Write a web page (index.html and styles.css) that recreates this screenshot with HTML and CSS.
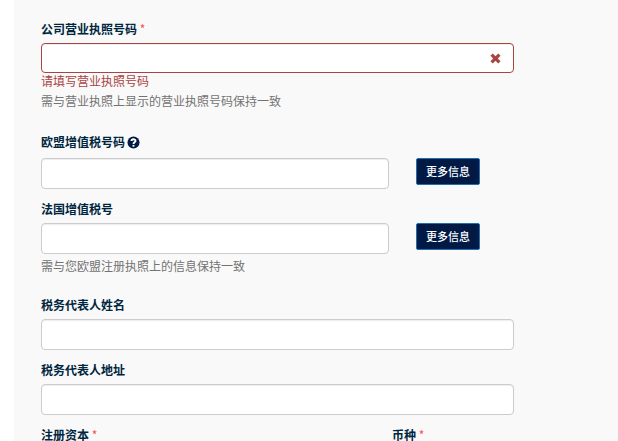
FILE: index.html
```html
<!DOCTYPE html>
<html lang="zh-CN">
<head>
    <meta charset="UTF-8" />
    <meta name="viewport" content="width=device-width, initial-scale=1.0" />
    <title>公司营业执照号码</title>
    <link rel="stylesheet" href="styles.css">
</head>

<body>
    <form class="panel">
        <div class="form-group has-error">
            <label for="license">公司营业执照号码 <span class="required">*</span></label>
            <div class="input-wrap">
                <input type="text" id="license" class="form-control" />
                <svg class="feedback" viewBox="0 0 12 12" aria-hidden="true">
                    <path d="M3 0.5 L6 3.5 L9 0.5 L11.5 3 L8.5 6 L11.5 9 L9 11.5 L6 8.5 L3 11.5 L0.5 9 L3.5 6 L0.5 3 Z" />
                </svg>
            </div>
            <p class="error-text">请填写营业执照号码</p>
            <p class="help-text">需与营业执照上显示的营业执照号码保持一致</p>
        </div>

        <div class="form-group">
            <label for="euVat" class="with-icon">欧盟增值税号码
                <svg class="help-icon" viewBox="0 0 14 14" aria-hidden="true">
                    <circle cx="7" cy="7" r="6.5" />
                    <path d="M4.8 5.4 C4.8 2.9 9.2 2.9 9.2 5.3 C9.2 6.8 7 6.8 7 8.5" />
                    <rect x="6" y="9.6" width="2" height="1.9" />
                </svg>
            </label>
            <div class="input-row">
                <input type="text" id="euVat" class="form-control" />
                <button type="button" class="btn">更多信息</button>
            </div>
        </div>

        <div class="form-group">
            <label for="frVat">法国增值税号</label>
            <div class="input-row">
                <input type="text" id="frVat" class="form-control" />
                <button type="button" class="btn">更多信息</button>
            </div>
            <p class="help-text">需与您欧盟注册执照上的信息保持一致</p>
        </div>

        <div class="form-group">
            <label for="repName">税务代表人姓名</label>
            <input type="text" id="repName" class="form-control" />
        </div>

        <div class="form-group">
            <label for="repAddress">税务代表人地址</label>
            <input type="text" id="repAddress" class="form-control" />
        </div>

        <div class="split">
            <div class="form-group">
                <label for="capital">注册资本 <span class="required">*</span></label>
                <input type="text" id="capital" class="form-control" />
            </div>
            <div class="form-group">
                <label for="currency">币种 <span class="required">*</span></label>
                <input type="text" id="currency" class="form-control" />
            </div>
        </div>
    </form>
</body>
</html>
```

FILE: styles.css
```css
* {
    box-sizing: border-box;
}

body {
    margin: 0;
    height: 100vh;
    overflow: hidden;
    background: #ffffff;
    color: #00263e;
    font-family: "Noto Sans CJK SC", sans-serif;
    font-size: 12px;
    line-height: 18px;
}

.panel {
    min-height: 100vh;
    margin-left: 14px;
    padding: 20px 104px 20px 27px;
    background: #f9f9f9;
}

.form-group {
    margin-bottom: 11px;
}

label {
    display: block;
    margin-bottom: 5px;
    font-weight: bold;
}

.with-icon {
    display: flex;
    align-items: center;
    gap: 2px;
    height: 22px;
}

.help-icon {
    width: 13px;
    height: 13px;
}

.help-icon circle {
    fill: #001a45;
}

.help-icon path {
    fill: none;
    stroke: #ffffff;
    stroke-width: 2;
}

.help-icon rect {
    fill: #ffffff;
}

.required {
    color: #ff4d4d;
    font-weight: normal;
}

.form-control {
    display: block;
    width: 100%;
    height: 31px;
    padding: 4px 10px;
    border: 1px solid #cccccc;
    border-radius: 4px;
    background: #ffffff;
    box-shadow: inset 0 1px 1px rgba(0, 0, 0, 0.075);
    font: inherit;
}

.input-wrap {
    position: relative;
}

.has-error .form-control {
    height: 30px;
    padding-right: 36px;
    border-color: #a94442;
}

.feedback {
    position: absolute;
    top: 10px;
    right: 13px;
    width: 11px;
    height: 11px;
    fill: #a94442;
}

.input-row {
    display: flex;
    align-items: flex-start;
    gap: 27px;
    margin-right: 34px;
}

.input-row .form-control {
    flex: 1;
    min-width: 0;
}

.btn {
    padding: 4px 9px;
    border: 1px solid #1f6fae;
    border-radius: 2px;
    background: #001a45;
    color: #ffffff;
    font-family: inherit;
    font-size: 11px;
    font-weight: 500;
    line-height: 17px;
    cursor: pointer;
}

.error-text,
.help-text {
    margin: 0;
    color: #737373;
    line-height: 16px;
}

.error-text {
    color: #a94442;
}

.help-text {
    margin-top: 4px;
    margin-bottom: 22px;
}

.split {
    display: grid;
    grid-template-columns: 324fr 122fr;
    gap: 27px;
}
```
